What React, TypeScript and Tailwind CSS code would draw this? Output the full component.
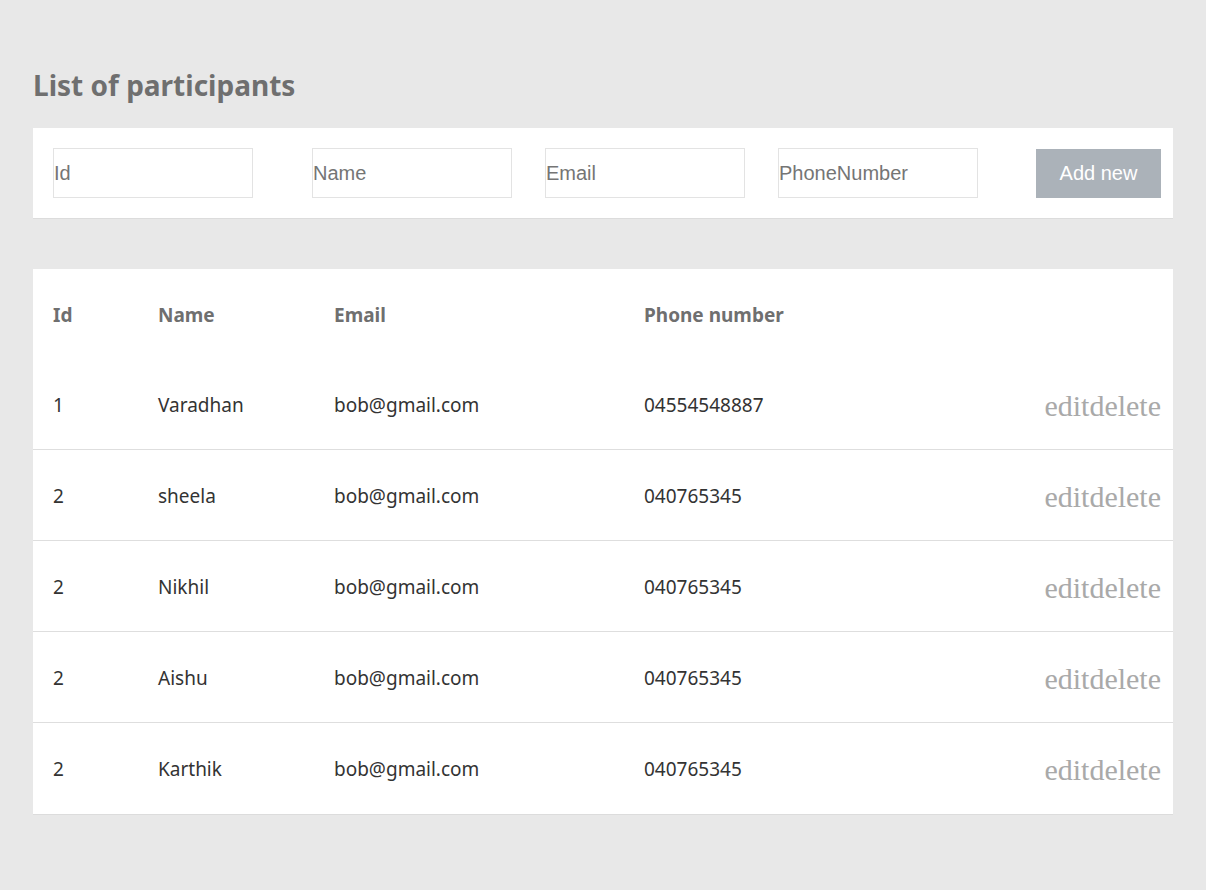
import React from "react";

interface IParticipant {
	id: string;
	name: string;
	email: string;
	phone: string;
}

const participants: IParticipant[] = [
	{ id: "1", name: "Varadhan", email: "bob@gmail.com", phone: "04554548887" },
	{ id: "2", name: "sheela", email: "bob@gmail.com", phone: "040765345" },
	{ id: "2", name: "Nikhil", email: "bob@gmail.com", phone: "040765345" },
	{ id: "2", name: "Aishu", email: "bob@gmail.com", phone: "040765345" },
	{ id: "2", name: "Karthik", email: "bob@gmail.com", phone: "040765345" },
];

const sans = "font-['Noto_Sans',sans-serif]";

const App = () => {
	return (
		<div className={`min-h-[890px] bg-[#e8e8e8] px-[33px] pt-[66px] ${sans}`}>
			<h2 className="text-[28px] leading-[38px] font-bold text-[#6f6f6f]">List of participants</h2>

			{/* Add form */}
			<div className="mt-[24px] w-[1140px] h-[91px] bg-white border-b-[1px] border-[#dcdcdc] flex items-center pl-[20px] pr-[12px] font-['Liberation_Sans',Arial,sans-serif]">
				<input className="w-[200px] h-[50px] border border-[#e3e3e3] text-[20px] text-[#333] placeholder:text-[#757575] outline-none" placeholder="Id" />
				<input className="ml-[59px] w-[200px] h-[50px] border border-[#e3e3e3] text-[20px] text-[#333] placeholder:text-[#757575] outline-none" placeholder="Name" />
				<input className="ml-[33px] w-[200px] h-[50px] border border-[#e3e3e3] text-[20px] text-[#333] placeholder:text-[#757575] outline-none" placeholder="Email" />
				<input className="ml-[33px] w-[200px] h-[50px] border border-[#e3e3e3] text-[20px] text-[#333] placeholder:text-[#757575] outline-none" placeholder="PhoneNumber" />
				<button className="ml-auto w-[125px] h-[49px] bg-[#abb2b9] text-white text-[20px]">Add new</button>
			</div>

			{/* Table */}
			<div className="mt-[50px] w-[1140px] bg-white border-b-[1px] border-[#dcdcdc]">
				<div className="flex items-center h-[90px] px-[20px] text-[19px] font-bold text-[#6f6f6f] pt-[2px]">
					<div className="w-[105px]">Id</div>
					<div className="w-[176px]">Name</div>
					<div className="w-[310px]">Email</div>
					<div>Phone number</div>
				</div>
				{participants.map(({ id, name, email, phone }, index) => (
					<div
						key={index}
						className={`flex items-center h-[91px] pt-[2px] pl-[20px] pr-[12px] text-[19px] text-[#333] ${index < participants.length - 1 ? "border-b border-[#dedede]" : ""}`}>
						<div className="w-[105px]">{id}</div>
						<div className="w-[176px]">{name}</div>
						<div className="w-[310px]">{email}</div>
						<div>{phone}</div>
						<div className="ml-auto font-['Liberation_Serif','Times_New_Roman',serif] text-[30px] text-[#a9a9a9]">
							<button>edit</button>
							<button>delete</button>
						</div>
					</div>
				))}
			</div>
		</div>
	);
};

export default App;
